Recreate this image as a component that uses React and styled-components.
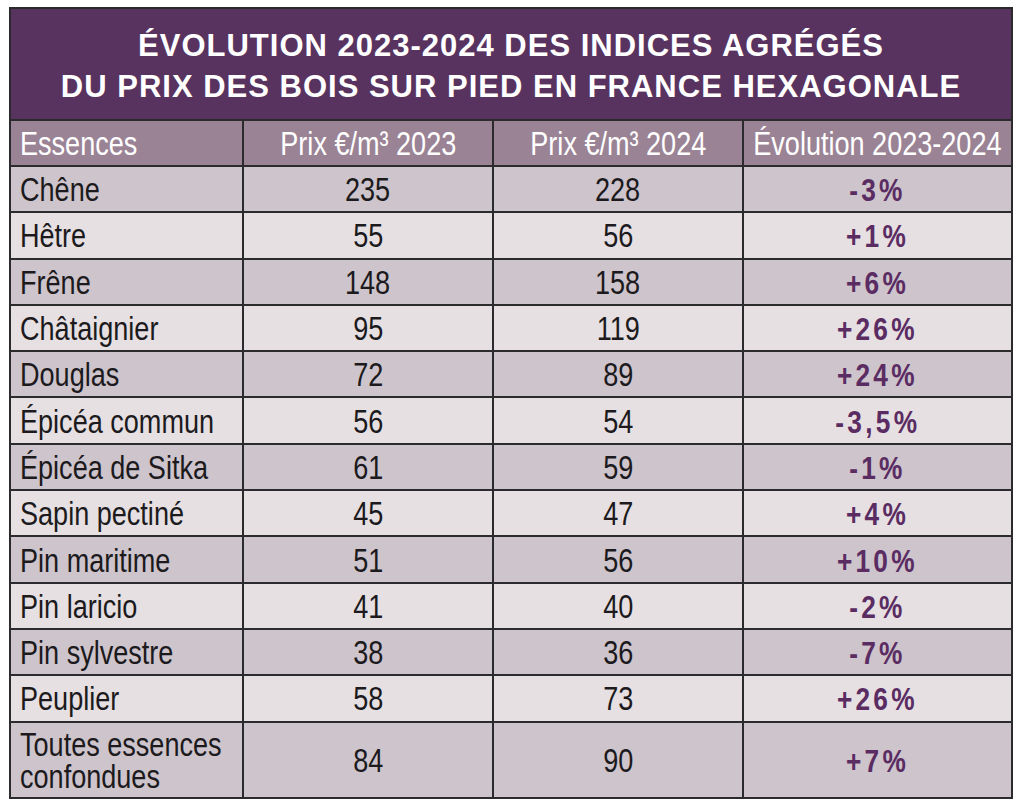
import React from "react";
import styled, { createGlobalStyle } from "styled-components";

const Global = createGlobalStyle`
  body {
    margin: 0;
    background: #ffffff;
    font-family: "Liberation Sans", Arial, sans-serif;
  }
`;

const Page = styled.div`
  padding: 7px 0 0 9px;
`;

const Table = styled.div`
  width: 1004px;
  box-sizing: border-box;
  display: grid;
  grid-template-columns: 231px 248px 248px 267px;
  grid-template-rows: 110px 44px repeat(12, 44.3px) 74px;
  gap: 2px;
  padding: 2px;
  background: #2b2a2c;
`;

const Title = styled.div`
  grid-column: 1 / -1;
  background: #58335f;
  color: #ffffff;
  font-weight: 700;
  font-size: 31px;
  letter-spacing: 1px;
  line-height: 41px;
  text-align: center;
  display: flex;
  flex-direction: column;
  justify-content: center;
  padding-top: 3px;
`;

const Cell = styled.div`
  display: flex;
  align-items: center;
  justify-content: ${(p) => (p.$left ? "flex-start" : "center")};
  padding: ${(p) => (p.$left ? "2px 0 0 9px" : "2px 0 0 0")};
  background: ${(p) => p.$bg};
  color: ${(p) => p.$color || "#1c1a1c"};
  font-size: 33px;
  line-height: 32px;
`;

/* narrow face: Arial Narrow is Arial squeezed to ~82% */
const Narrow = styled.span`
  display: inline-block;
  white-space: nowrap;
  transform: scaleX(0.82);
  transform-origin: ${(p) => (p.$left ? "left center" : "center")};
`;

const Pct = styled(Narrow)`
  font-weight: 700;
  font-size: 32px;
  letter-spacing: 4px;
  color: #5a2c62;
`;

const HEAD = "#9b8396";
const DARK = "#cdc4cc";
const LIGHT = "#e6e0e3";

const rows = [
  ["Chêne", "235", "228", "-3%"],
  ["Hêtre", "55", "56", "+1%"],
  ["Frêne", "148", "158", "+6%"],
  ["Châtaignier", "95", "119", "+26%"],
  ["Douglas", "72", "89", "+24%"],
  ["Épicéa commun", "56", "54", "-3,5%"],
  ["Épicéa de Sitka", "61", "59", "-1%"],
  ["Sapin pectiné", "45", "47", "+4%"],
  ["Pin maritime", "51", "56", "+10%"],
  ["Pin laricio", "41", "40", "-2%"],
  ["Pin sylvestre", "38", "36", "-7%"],
  ["Peuplier", "58", "73", "+26%"],
  [["Toutes essences", "confondues"], "84", "90", "+7%"],
];

export default function App() {
  return (
    <Page>
      <Global />
      <Table>
        <Title>
          <div>ÉVOLUTION 2023-2024 DES INDICES AGRÉGÉS</div>
          <div>DU PRIX DES BOIS SUR PIED EN FRANCE HEXAGONALE</div>
        </Title>
        <Cell $left $bg={HEAD} $color="#fff">
          <Narrow $left>Essences</Narrow>
        </Cell>
        <Cell $bg={HEAD} $color="#fff">
          <Narrow>Prix €/m³ 2023</Narrow>
        </Cell>
        <Cell $bg={HEAD} $color="#fff">
          <Narrow>Prix €/m³ 2024</Narrow>
        </Cell>
        <Cell $bg={HEAD} $color="#fff">
          <Narrow>Évolution 2023-2024</Narrow>
        </Cell>
        {rows.map((r, i) => {
          const bg = i % 2 === 0 ? DARK : LIGHT;
          return (
            <React.Fragment key={i}>
              <Cell $left $bg={bg}>
                {Array.isArray(r[0]) ? (
                  <Narrow $left>
                    {r[0][0]}
                    <br />
                    {r[0][1]}
                  </Narrow>
                ) : (
                  <Narrow $left>{r[0]}</Narrow>
                )}
              </Cell>
              <Cell $bg={bg}>
                <Narrow>{r[1]}</Narrow>
              </Cell>
              <Cell $bg={bg}>
                <Narrow>{r[2]}</Narrow>
              </Cell>
              <Cell $bg={bg}>
                <Pct>{r[3]}</Pct>
              </Cell>
            </React.Fragment>
          );
        })}
      </Table>
    </Page>
  );
}
